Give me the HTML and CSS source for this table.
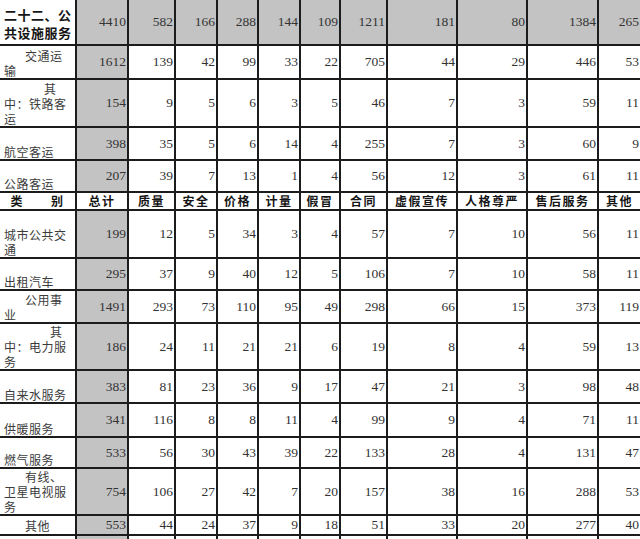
FILE: index.html
```html
<!DOCTYPE html>
<html lang="zh-CN">
<head>
<meta charset="utf-8">
<title>公共设施服务投诉统计</title>
<link rel="stylesheet" href="styles.css">
</head>
<body>
<div class="sheet">
  <!-- row 1 -->
  <div class="c k b"><span class="ln">二十二、公</span><span class="ln">共设施服务</span></div>
  <div class="c n g">4410</div><div class="c n g">582</div><div class="c n g">166</div><div class="c n g">288</div><div class="c n g">144</div><div class="c n g">109</div><div class="c n g">1211</div><div class="c n g">181</div><div class="c n g">80</div><div class="c n g">1384</div><div class="c n g">265</div>
  <!-- row 2 -->
  <div class="c k"><span class="ln i1">交通运</span><span class="ln">输</span></div>
  <div class="c n g">1612</div><div class="c n">139</div><div class="c n">42</div><div class="c n">99</div><div class="c n">33</div><div class="c n">22</div><div class="c n">705</div><div class="c n">44</div><div class="c n">29</div><div class="c n">446</div><div class="c n">53</div>
  <!-- row 3 -->
  <div class="c k"><span class="ln i3">其</span><span class="ln">中：铁路客</span><span class="ln">运</span></div>
  <div class="c n g">154</div><div class="c n">9</div><div class="c n">5</div><div class="c n">6</div><div class="c n">3</div><div class="c n">5</div><div class="c n">46</div><div class="c n">7</div><div class="c n">3</div><div class="c n">59</div><div class="c n">11</div>
  <!-- row 4 -->
  <div class="c k"><span class="ln">航空客运</span></div>
  <div class="c n g">398</div><div class="c n">35</div><div class="c n">5</div><div class="c n">6</div><div class="c n">14</div><div class="c n">4</div><div class="c n">255</div><div class="c n">7</div><div class="c n">3</div><div class="c n">60</div><div class="c n">9</div>
  <!-- row 5 -->
  <div class="c k"><span class="ln">公路客运</span></div>
  <div class="c n g">207</div><div class="c n">39</div><div class="c n">7</div><div class="c n">13</div><div class="c n">1</div><div class="c n">4</div><div class="c n">56</div><div class="c n">12</div><div class="c n">3</div><div class="c n">61</div><div class="c n">11</div>
  <!-- header row -->
  <div class="c h">类　　别</div>
  <div class="c h">总计</div><div class="c h">质量</div><div class="c h">安全</div><div class="c h">价格</div><div class="c h">计量</div><div class="c h">假冒</div><div class="c h">合同</div><div class="c h">虚假宣传</div><div class="c h">人格尊严</div><div class="c h">售后服务</div><div class="c h">其他</div>
  <!-- row 7 -->
  <div class="c k"><span class="ln">城市公共交</span><span class="ln">通</span></div>
  <div class="c n g">199</div><div class="c n">12</div><div class="c n">5</div><div class="c n">34</div><div class="c n">3</div><div class="c n">4</div><div class="c n">57</div><div class="c n">7</div><div class="c n">10</div><div class="c n">56</div><div class="c n">11</div>
  <!-- row 8 -->
  <div class="c k"><span class="ln">出租汽车</span></div>
  <div class="c n g">295</div><div class="c n">37</div><div class="c n">9</div><div class="c n">40</div><div class="c n">12</div><div class="c n">5</div><div class="c n">106</div><div class="c n">7</div><div class="c n">10</div><div class="c n">58</div><div class="c n">11</div>
  <!-- row 9 -->
  <div class="c k"><span class="ln i1">公用事</span><span class="ln">业</span></div>
  <div class="c n g">1491</div><div class="c n">293</div><div class="c n">73</div><div class="c n">110</div><div class="c n">95</div><div class="c n">49</div><div class="c n">298</div><div class="c n">66</div><div class="c n">15</div><div class="c n">373</div><div class="c n">119</div>
  <!-- row 10 -->
  <div class="c k"><span class="ln i4">其</span><span class="ln">中：电力服</span><span class="ln">务</span></div>
  <div class="c n g">186</div><div class="c n">24</div><div class="c n">11</div><div class="c n">21</div><div class="c n">21</div><div class="c n">6</div><div class="c n">19</div><div class="c n">8</div><div class="c n">4</div><div class="c n">59</div><div class="c n">13</div>
  <!-- row 11 -->
  <div class="c k"><span class="ln">自来水服务</span></div>
  <div class="c n g">383</div><div class="c n">81</div><div class="c n">23</div><div class="c n">36</div><div class="c n">9</div><div class="c n">17</div><div class="c n">47</div><div class="c n">21</div><div class="c n">3</div><div class="c n">98</div><div class="c n">48</div>
  <!-- row 12 -->
  <div class="c k"><span class="ln">供暖服务</span></div>
  <div class="c n g">341</div><div class="c n">116</div><div class="c n">8</div><div class="c n">8</div><div class="c n">11</div><div class="c n">4</div><div class="c n">99</div><div class="c n">9</div><div class="c n">4</div><div class="c n">71</div><div class="c n">11</div>
  <!-- row 13 -->
  <div class="c k"><span class="ln">燃气服务</span></div>
  <div class="c n g">533</div><div class="c n">56</div><div class="c n">30</div><div class="c n">43</div><div class="c n">39</div><div class="c n">22</div><div class="c n">133</div><div class="c n">28</div><div class="c n">4</div><div class="c n">131</div><div class="c n">47</div>
  <!-- row 14 -->
  <div class="c k"><span class="ln i1">有线、</span><span class="ln">卫星电视服</span><span class="ln">务</span></div>
  <div class="c n g">754</div><div class="c n">106</div><div class="c n">27</div><div class="c n">42</div><div class="c n">7</div><div class="c n">20</div><div class="c n">157</div><div class="c n">38</div><div class="c n">16</div><div class="c n">288</div><div class="c n">53</div>
  <!-- row 15 -->
  <div class="c k mid"><span class="ln i1">其他</span></div>
  <div class="c n g">553</div><div class="c n">44</div><div class="c n">24</div><div class="c n">37</div><div class="c n">9</div><div class="c n">18</div><div class="c n">51</div><div class="c n">33</div><div class="c n">20</div><div class="c n">277</div><div class="c n">40</div>
  <!-- row 16 (cut off) -->
  <div class="c"></div>
  <div class="c g"></div><div class="c"></div><div class="c"></div><div class="c"></div><div class="c"></div><div class="c"></div><div class="c"></div><div class="c"></div><div class="c"></div><div class="c"></div><div class="c"></div>
</div>
</body>
</html>
```
FILE: styles.css
```css
html, body {
  margin: 0;
  padding: 0;
  background: #ffffff;
  overflow: hidden;
}

body {
  width: 640px;
  height: 539px;
}

.sheet {
  display: grid;
  grid-template-columns: 77px 52px 47px 42px 41px 42px 40px 47px 70px 70px 71px 43px;
  grid-template-rows: 46px 34px 48px 33px 32px 18px 48px 32px 33px 47px 33px 34px 31px 47px 20px 20px;
  width: 642px;
}

.c {
  box-sizing: border-box;
  border-right: 2px solid #1c1c1c;
  border-bottom: 2px solid #1c1c1c;
  overflow: hidden;
  min-width: 0;
}

.g {
  background: #c3c3c3;
}

.n {
  display: flex;
  align-items: center;
  justify-content: flex-end;
  padding-right: 1px;
  font-family: "Liberation Serif", "Times New Roman", serif;
  font-size: 13.5px;
  color: #333333;
}

.k {
  display: flex;
  flex-direction: column;
  justify-content: flex-end;
  padding: 0 1px 0 4px;
  font-family: "Noto Sans CJK SC", "Noto Sans", sans-serif;
  font-size: 12px;
  letter-spacing: 0.5px;
  line-height: 15px;
  color: #3c3c3c;
  white-space: nowrap;
}

.k.b {
  font-weight: 700;
  font-size: 13px;
  line-height: 18px;
  padding-bottom: 2px;
  color: #151515;
}

.k.mid {
  justify-content: center;
}

.ln {
  display: block;
}

.i1 {
  padding-left: 21px;
}

.i3 {
  padding-left: 40px;
}

.i4 {
  padding-left: 46px;
}

.h {
  display: flex;
  align-items: center;
  justify-content: center;
  font-family: "Noto Sans CJK SC", "Noto Sans", sans-serif;
  font-weight: 700;
  font-size: 12px;
  letter-spacing: 1.5px;
  line-height: 16px;
  color: #151515;
  white-space: nowrap;
}
```
